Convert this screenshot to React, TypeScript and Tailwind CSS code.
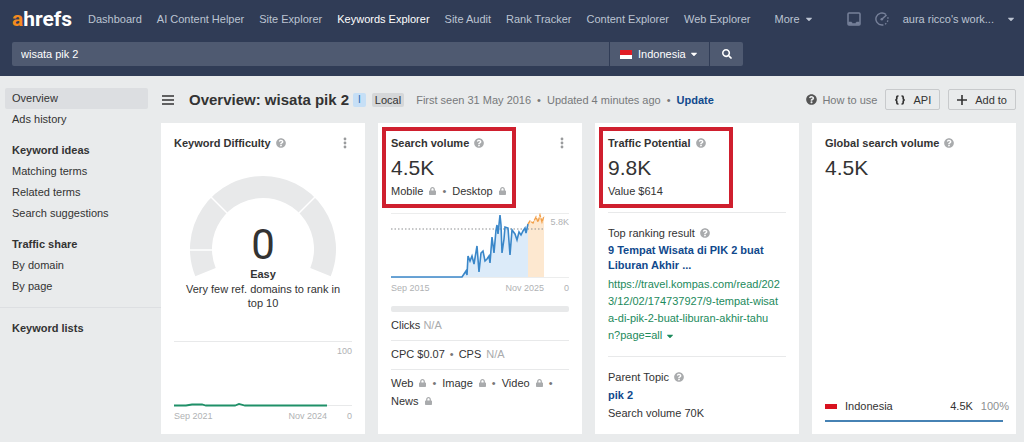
import type { ReactNode } from 'react';
import { FaCaretDown, FaLock, FaQuestionCircle, FaSearch } from 'react-icons/fa';

const NAV_ITEMS = [
  'Dashboard',
  'AI Content Helper',
  'Site Explorer',
  'Keywords Explorer',
  'Site Audit',
  'Rank Tracker',
  'Content Explorer',
  'Web Explorer',
];

const SIDEBAR_GROUPS = [
  { title: '', items: ['Overview', 'Ads history'] },
  { title: 'Keyword ideas', items: ['Matching terms', 'Related terms', 'Search suggestions'] },
  { title: 'Traffic share', items: ['By domain', 'By page'] },
];

const URL_LINES = [
  'https://travel.kompas.com/read/202',
  '3/12/02/174737927/9-tempat-wisat',
  'a-di-pik-2-buat-liburan-akhir-tahu',
];

const VOLUME_LINE =
  'M0 64H71L73 61L75 58L76 62L77 43L79 48L81 43L83 51L86 33L88 59L90 40L92 38L94 48L96 46L98 43L99 50L101 24L103 40L105 17L106 12L107 21L109 2L110 12L111 40L113 26L114 14L117 15L119 42L121 17L124 21L126 27L128 19L130 22L132 18L134 15L135 20L137 11';
const FORECAST_LINE = 'M137 11L139 8L142 10L145 4L147 9L149 2L151 9L153 3';

function HelpIcon() {
  return <FaQuestionCircle className="size-2.5 shrink-0 text-[#a9abad]" aria-hidden />;
}

function Lock() {
  return <FaLock className="inline h-2 w-[7px] text-[#a9abad]" aria-hidden />;
}

function Dot() {
  return <span className="text-[#777]">•</span>;
}

function MoreButton() {
  return (
    <button type="button" aria-label="More options" className="flex w-3.5 justify-center text-[#999b9d]">
      <svg viewBox="0 0 4 12" className="h-3 w-1" fill="currentColor" aria-hidden>
        <circle cx="2" cy="2" r="1.4" />
        <circle cx="2" cy="6" r="1.4" />
        <circle cx="2" cy="10" r="1.4" />
      </svg>
    </button>
  );
}

function Card({ title, menu, children }: { title: string; menu?: boolean; children: ReactNode }) {
  return (
    <section className="relative flex min-w-0 flex-col bg-white px-[13px] pt-3 pb-3">
      <div className="flex h-4 items-center justify-between">
        <h2 className="flex items-center gap-[5px] font-bold whitespace-nowrap">
          {title} <HelpIcon />
        </h2>
        {menu && <MoreButton />}
      </div>
      {children}
    </section>
  );
}

/** Frame drawn over the headline metric of a card. */
function Highlight() {
  return <div className="pointer-events-none absolute top-1 left-1 h-[81px] w-[134px] border-4 border-[#cf1f2e]" aria-hidden />;
}

function Metric({ children }: { children: ReactNode }) {
  return <p className="mt-[3px] text-[21px] leading-7">{children}</p>;
}

function DifficultyGauge() {
  return (
    <svg viewBox="0 0 146 102" className="mx-auto mt-6 h-[102px] w-[146px]" aria-hidden>
      <path d="M15.5 97.2A62 62 0 1 1 130.5 97.2" fill="none" stroke="#e8e9ea" strokeWidth="22" />
      <g stroke="#fff" strokeWidth="1.5">
        <path d="M0 75H24" />
        <path d="M20 21L39 40" />
        <path d="M126 21L107 40" />
      </g>
    </svg>
  );
}

function TopBar() {
  return (
    <header className="bg-[#303c56] pb-2.5 text-[#bcc4d2]">
      <div className="flex h-[42px] items-center pr-2 pb-1 pl-3 whitespace-nowrap">
        <a href="#" className="w-[76px] font-['Roboto',sans-serif] text-[21px] leading-6 font-bold text-white">
          <span className="text-[#f58b1f]">a</span>hrefs
        </a>
        <nav className="flex gap-[15px]">
          {NAV_ITEMS.map((item) => (
            <a key={item} href="#" className={item === 'Keywords Explorer' ? 'text-white' : ''}>
              {item}
            </a>
          ))}
        </nav>
        <button type="button" className="ml-6 flex items-center gap-1">
          More <FaCaretDown className="size-2.5" aria-hidden />
        </button>
        <div className="ml-auto flex items-center gap-3.5">
          <button type="button" aria-label="Inbox" className="text-[#77819a]">
            <svg viewBox="0 0 14 14" className="size-3.5" fill="none" stroke="currentColor" strokeWidth="1.5" aria-hidden>
              <rect x="1" y="1" width="12" height="12" rx="1" />
              <path d="M1.5 10H4.5L5.5 11.5H8.5L9.5 10H12.5V12.5H1.5Z" fill="currentColor" strokeWidth="0.5" />
            </svg>
          </button>
          <button type="button" aria-label="Usage" className="text-[#77819a]">
            <svg viewBox="0 0 14 14" className="size-3.5" fill="none" stroke="currentColor" strokeWidth="1.4" aria-hidden>
              <path d="M11 2.6A6 6 0 1 0 7 13" />
              <path d="M7 13A6 6 0 0 0 12.5 4.6" strokeDasharray="1.5 1.7" />
              <path d="M6.5 7.5L11.5 3" strokeWidth="1.6" />
              <circle cx="6.8" cy="7.2" r="1.3" fill="currentColor" stroke="none" />
            </svg>
          </button>
          <button type="button" className="flex items-center gap-3">
            aura ricco's work... <FaCaretDown className="size-2.5" aria-hidden />
          </button>
        </div>
      </div>
      <form className="flex h-6 w-[743px] max-w-full gap-px pl-3 text-white" onSubmit={(e) => e.preventDefault()}>
        <input
          aria-label="Keyword"
          defaultValue="wisata pik 2"
          className="min-w-0 flex-1 rounded-l-xs bg-[#4f5a71] px-[9px] outline-none"
        />
        <label className="relative flex w-[99px] items-center gap-1.5 bg-[#4f5a71] pl-2.5">
          <span className="h-[9px] w-3 shrink-0 bg-linear-to-b from-[#e11d26] from-50% to-white to-50%" />
          <select aria-label="Country" className="w-full appearance-none bg-transparent outline-none">
            <option>Indonesia</option>
          </select>
          <FaCaretDown className="pointer-events-none absolute right-2.5 size-2.5" aria-hidden />
        </label>
        <button type="submit" aria-label="Search" className="flex w-[33px] items-center justify-center rounded-r-xs bg-[#4f5a71]">
          <FaSearch className="size-2.5" aria-hidden />
        </button>
      </form>
    </header>
  );
}

function Sidebar() {
  return (
    <aside className="w-[161px] shrink-0 pt-3 leading-[21px]">
      {SIDEBAR_GROUPS.map((group) => (
        <div key={group.items[0]} className="mb-2.5 pr-[13px] pl-[5px]">
          {group.title && <h3 className="pl-[7px] font-bold">{group.title}</h3>}
          {group.items.map((item) => (
            <a
              key={item}
              href="#"
              className={item === 'Overview' ? 'block rounded-xs bg-[#dcdee1] pl-[7px]' : 'block pl-[7px]'}
            >
              {item}
            </a>
          ))}
        </div>
      ))}
      <div className="border-t border-[#dddfe2] pt-2.5 pl-3">
        <h3 className="font-bold">Keyword lists</h3>
      </div>
    </aside>
  );
}

function PageHeader() {
  return (
    <div className="flex h-[47px] items-center whitespace-nowrap">
      <button type="button" aria-label="Toggle menu" className="mr-[15px] ml-px">
        <svg viewBox="0 0 12 10" className="h-2.5 w-3" stroke="#333" strokeWidth="1.6" aria-hidden>
          <path d="M0 1H12M0 5H12M0 9H12" />
        </svg>
      </button>
      <h1 className="text-[15px] font-bold">Overview: wisata pik 2</h1>
      <span className="ml-1 rounded-xs bg-[#c6dff6] px-[5px] text-[10px] leading-[14px] text-[#2a6db0]">I</span>
      <span className="ml-1.5 rounded-xs bg-[#d5d7d9] px-[3px] leading-[14px]">Local</span>
      <p className="ml-3 flex gap-1.5 text-[#77797b]">
        First seen 31 May 2016 <Dot /> Updated 4 minutes ago <Dot />
        <a href="#" className="font-bold text-[#10498c]">
          Update
        </a>
      </p>
      <a href="#" className="ml-auto flex items-center gap-[5px] text-[#77797b]">
        <FaQuestionCircle className="size-[11px] text-[#555]" aria-hidden /> How to use
      </a>
      <button type="button" className="ml-2 flex h-[21px] items-center gap-[7px] rounded-xs border border-[#c8cacc] px-2">
        <svg viewBox="0 0 12 10" className="h-2.5 w-3" fill="none" stroke="#333" strokeWidth="1.7" aria-hidden>
          <path d="M4.5 1H4Q2.8 1 2.8 2.2V3.6Q2.8 5 1.2 5Q2.8 5 2.8 6.4V7.8Q2.8 9 4 9H4.5" />
          <path d="M7.5 1H8Q9.2 1 9.2 2.2V3.6Q9.2 5 10.8 5Q9.2 5 9.2 6.4V7.8Q9.2 9 8 9H7.5" />
        </svg>
        API
      </button>
      <button type="button" className="ml-2 flex h-[21px] items-center gap-2 rounded-xs border border-[#c8cacc] px-2">
        <svg viewBox="0 0 10 10" className="size-2.5" stroke="#333" strokeWidth="1.6" aria-hidden>
          <path d="M0 5H10M5 0V10" />
        </svg>
        Add to
      </button>
    </div>
  );
}

function DifficultyCard() {
  return (
    <Card title="Keyword Difficulty" menu>
      <DifficultyGauge />
      <div className="-mt-[54px] text-center leading-3.5">
        <p className="font-['Roboto',sans-serif] text-[42px] leading-11">0</p>
        <p className="font-bold">Easy</p>
        <p className="mx-auto mt-px max-w-[172px]">Very few ref. domains to rank in top 10</p>
      </div>
      <div className="mt-auto -mb-0.5 border-t border-[#e8e9ea] pt-0.5 text-[9px] text-[#b0b2b4]">
        <p className="text-right leading-3.5">100</p>
        <svg viewBox="0 0 178 50" className="block w-full" fill="none" aria-hidden>
          <path d="M0 47.5H178" stroke="#e8e9ea" />
          <path d="M0 47.5H12L18 46.5H28L32 47.5H61L65 46L71 47.5H153" stroke="#1f9068" strokeWidth="1.8" />
        </svg>
        <div className="flex leading-4">
          <span>Sep 2021</span>
          <span className="ml-auto">Nov 2024</span>
          <span className="w-[25px] text-right">0</span>
        </div>
      </div>
    </Card>
  );
}

function VolumeCard() {
  return (
    <Card title="Search volume" menu>
      <Highlight />
      <Metric>4.5K</Metric>
      <p className="flex items-center gap-1.5 leading-[18px]">
        Mobile <Lock /> <Dot /> Desktop <Lock />
      </p>
      <svg viewBox="0 0 178 66" className="mt-[13px] block w-full" fill="none" aria-hidden>
        <path d="M0 .5H178M0 64.5H178" stroke="#eceded" />
        <path d={`${VOLUME_LINE}V64Z`} fill="#dcebf9" />
        <path d={`${FORECAST_LINE}V64H137Z`} fill="#fde8d0" />
        <path d="M0 16H153" stroke="#8d8f91" strokeDasharray="1.5 2" />
        <path d={VOLUME_LINE} stroke="#3a87c9" strokeWidth="1.6" />
        <path d={FORECAST_LINE} stroke="#f2a04a" strokeWidth="1.4" strokeDasharray="4 1" />
        <text x="178" y="12" textAnchor="end" fontSize="9" fill="#b0b2b4">
          5.8K
        </text>
      </svg>
      <div className="mt-px flex text-[9px] leading-4 text-[#b0b2b4]">
        <span>Sep 2015</span>
        <span className="ml-auto">Nov 2025</span>
        <span className="w-[25px] text-right">0</span>
      </div>
      <div className="mt-2.5 h-1.5 rounded-xs bg-[#e8e9ea]" />
      <p className="border-b border-[#e8e9ea] pt-1 pb-1.5 leading-[18px]">
        Clicks <span className="text-[#a9abad]">N/A</span>
      </p>
      <p className="flex gap-[5px] border-b border-[#e8e9ea] pt-1 pb-1.5 leading-[18px]">
        CPC $0.07 <Dot /> CPS <span className="text-[#a9abad]">N/A</span>
      </p>
      <div className="flex flex-wrap gap-x-1.5 pt-1 leading-[18px]">
        {['Web', 'Image', 'Video', 'News'].map((kind) => (
          <span key={kind} className="flex items-center gap-1.5">
            {kind} <Lock /> {kind !== 'News' && <Dot />}
          </span>
        ))}
      </div>
    </Card>
  );
}

function TrafficCard() {
  return (
    <Card title="Traffic Potential">
      <Highlight />
      <Metric>9.8K</Metric>
      <p className="leading-[18px]">Value $614</p>
      <div className="mt-3 border-t border-[#e8e9ea] pt-3">
        <p className="flex items-center gap-[5px] leading-4">
          Top ranking result <HelpIcon />
        </p>
        <a href="#" className="mt-0.5 block leading-[15px] font-bold text-[#10498c]">
          9 Tempat Wisata di PIK 2 buat
          <br />
          Liburan Akhir ...
        </a>
        <a href="#" className="mt-[3px] block leading-[17px] text-[#1c8a5c]">
          {URL_LINES.map((line) => (
            <span key={line} className="block">
              {line}
            </span>
          ))}
          n?page=all <FaCaretDown className="inline size-2.5" aria-hidden />
        </a>
      </div>
      <div className="mt-3 border-t border-[#e8e9ea] pt-[11px]">
        <p className="flex items-center gap-[5px] leading-[18px]">
          Parent Topic <HelpIcon />
        </p>
        <a href="#" className="block leading-[18px] font-bold text-[#10498c]">
          pik 2
        </a>
        <p className="leading-[18px]">Search volume 70K</p>
      </div>
    </Card>
  );
}

function GlobalCard() {
  return (
    <Card title="Global search volume">
      <Metric>4.5K</Metric>
      <div className="mt-auto">
        <div className="-mr-1.5 flex items-center pb-1.5 leading-4">
          <span className="mr-2 h-[5px] w-3 bg-[#d8121f]" />
          Indonesia
          <span className="ml-auto">4.5K</span>
          <span className="ml-2 text-[#8d8f91]">100%</span>
        </div>
        <div className="h-0.5 bg-[#4682b4]" />
      </div>
    </Card>
  );
}

export default function App() {
  return (
    <div className="min-h-screen bg-[#e9ebec] font-['Liberation_Sans',Arial,sans-serif] text-[11px] leading-4 text-[#333]">
      <TopBar />
      <div className="flex">
        <Sidebar />
        <main className="min-w-0 flex-1 pr-2 pb-2">
          <PageHeader />
          <div className="grid grid-cols-4 gap-[13px]">
            <DifficultyCard />
            <VolumeCard />
            <TrafficCard />
            <GlobalCard />
          </div>
        </main>
      </div>
    </div>
  );
}
